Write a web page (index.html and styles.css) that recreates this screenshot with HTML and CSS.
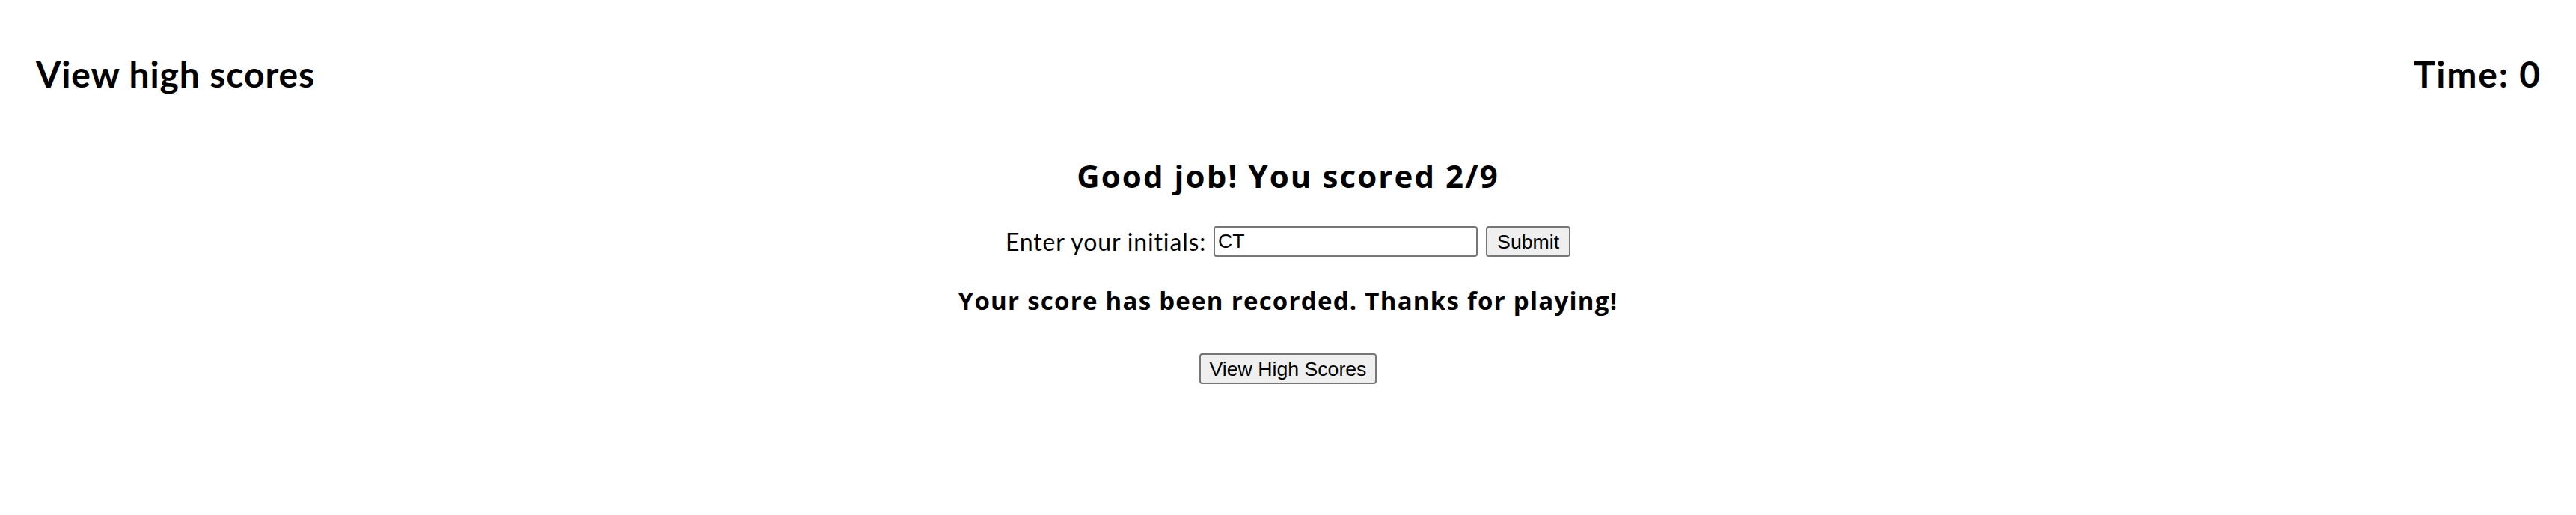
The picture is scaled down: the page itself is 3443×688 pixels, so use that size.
FILE: index.html
```html
<!DOCTYPE html>
<html lang="en">
<head>
<meta charset="utf-8">
<title>Quiz</title>
<link rel="stylesheet" href="styles.css">
</head>
<body>
<header class="top-bar">
  <a class="high-link" href="#">View high scores</a>
  <div class="timer">Time: 0</div>
</header>
<main class="panel">
  <h2 class="result">Good job! You scored 2/9</h2>
  <form class="entry" onsubmit="return false;">
    <label class="entry-label" for="initials">Enter your initials:</label>
    <input class="entry-input" id="initials" type="text" value="CT">
    <button class="btn btn-submit" type="submit">Submit</button>
  </form>
  <p class="recorded">Your score has been recorded. Thanks for playing!</p>
  <button class="btn btn-view" type="button">View High Scores</button>
</main>
</body>
</html>
```
FILE: styles.css
```css
html, body {
  margin: 0;
  padding: 0;
  background: #ffffff;
  color: #000000;
}

body {
  font-family: "Lato", "Liberation Sans", sans-serif;
}

.top-bar {
  display: flex;
  justify-content: space-between;
  align-items: baseline;
  padding: 0 46px 0 48px;
  margin-top: 71px;
  font-size: 48px;
  line-height: 56px;
  font-weight: 700;
}

.high-link {
  color: #000000;
  text-decoration: none;
  letter-spacing: 0.9px;
}

.timer {
  letter-spacing: 1.8px;
}

.panel {
  display: flex;
  flex-direction: column;
  align-items: center;
}

.result {
  margin: 84px 0 0;
  font-family: "Open Sans", "Lato", sans-serif;
  font-size: 42px;
  line-height: 48px;
  font-weight: 700;
  letter-spacing: 2.1px;
}

.entry {
  display: flex;
  align-items: center;
  gap: 10px;
  margin-top: 43px;
  height: 41px;
}

.entry-label {
  font-size: 32px;
  line-height: 41px;
  letter-spacing: 0.85px;
}

.entry-input {
  box-sizing: border-box;
  width: 353px;
  height: 41px;
  margin: 0 1px 0 0;
  padding: 2px 4px;
  border: 2px solid #767676;
  border-radius: 4px;
  font-family: "Liberation Sans", Arial, sans-serif;
  font-size: 26.67px;
  color: #000000;
  background: #ffffff;
}

.btn {
  box-sizing: border-box;
  height: 41px;
  margin: 0;
  padding: 0 13px;
  border: 2px solid #767676;
  border-radius: 4px;
  background: #efefef;
  color: #000000;
  font-family: "Liberation Sans", Arial, sans-serif;
  font-size: 26.67px;
  line-height: 30px;
}

.recorded {
  margin: 39px 0 0;
  font-family: "Open Sans", "Lato", sans-serif;
  font-size: 33px;
  line-height: 40px;
  font-weight: 700;
  letter-spacing: 1.26px;
}

.btn-view {
  margin-top: 50px;
  padding: 0 12px;
}
```
